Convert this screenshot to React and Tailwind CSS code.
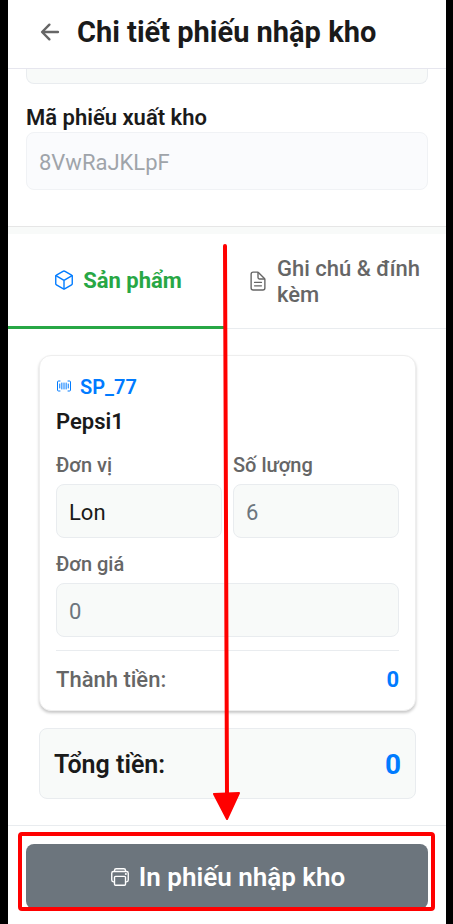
import {
  IoArrowBack,
  IoCubeOutline,
  IoDocumentTextOutline,
  IoPrintOutline,
} from "react-icons/io5";

function BarcodeIcon() {
  return (
    <svg width="16" height="16" viewBox="0 0 16 16" fill="none" stroke="currentColor" strokeLinecap="round" aria-hidden="true">
      <path d="M4 3H2.5Q1.5 3 1.5 4V12Q1.5 13 2.5 13H4M12 3H13.5Q14.5 3 14.5 4V12Q14.5 13 13.5 13H12" strokeWidth="1" />
      <path d="M3.75 6V10M5.85 5V11M8 5V11M10.15 5V11M12.25 6V10" strokeWidth="1" />
    </svg>
  );
}

function Field({ id, label, value, className }) {
  return (
    <div className="flex min-w-0 flex-1 flex-col gap-[6px]">
      <label htmlFor={id} className="text-[20px] leading-[26px] font-medium text-[#666666]">
        {label}
      </label>
      <input
        id={id}
        readOnly
        defaultValue={value}
        className={`h-[54px] w-full rounded-lg border border-[#e9ecef] bg-[#f8faf9] px-3 pt-[2px] text-[22px] outline-none ${className}`}
      />
    </div>
  );
}

function Header() {
  return (
    <header className="border-b border-[#e6e6ee] pb-1">
      <div className="flex h-16 items-center gap-[14px] pl-[29px]">
        <button type="button" aria-label="Quay lại" className="text-[#666666]">
          <IoArrowBack size={26} />
        </button>
        <h1 className="text-[29px] leading-8 font-bold whitespace-nowrap">Chi tiết phiếu nhập kho</h1>
      </div>
    </header>
  );
}

function Tabs() {
  return (
    <nav role="tablist" className="flex h-[95px]">
      <button
        type="button"
        role="tab"
        aria-selected="true"
        className="flex flex-1 items-center justify-center gap-2 border-b-[3px] border-[#28a745] px-5 text-[22px] leading-[26px] font-bold text-[#28a745]"
      >
        <IoCubeOutline size={22} className="shrink-0 text-[#007bff]" />
        <span className="pt-[2px]">Sản phẩm</span>
      </button>
      <button
        type="button"
        role="tab"
        aria-selected="false"
        className="flex flex-1 items-center justify-center gap-2 border-b border-[#e9ecef] px-5 text-left text-[22px] leading-[26px] font-medium text-[#666666]"
      >
        <IoDocumentTextOutline size={22} className="shrink-0" />
        <span className="pt-[2px]">Ghi chú &amp; đính kèm</span>
      </button>
    </nav>
  );
}

function ProductCard() {
  return (
    <article className="rounded-xl border border-[#eeeeee] bg-white p-4 shadow-[0_2px_3px_rgba(0,0,0,0.22)]">
      <div className="flex h-7 items-center gap-2 text-[20px] font-semibold text-[#007bff]">
        <BarcodeIcon />
        <span className="pt-[2px]">SP_77</span>
      </div>
      <h2 className="mt-2 text-[22px] leading-7 font-semibold">Pepsi1</h2>
      <div className="mt-4 flex gap-[11px]">
        <Field id="unit" label="Đơn vị" value="Lon" className="text-[#1a1a1a]" />
        <Field id="quantity" label="Số lượng" value="6" className="text-[#6c757d]" />
      </div>
      <div className="mt-[13px] flex">
        <Field id="price" label="Đơn giá" value="0" className="text-[#6c757d]" />
      </div>
      <div className="mt-[13px] flex justify-between border-t border-[#e9ecef] pt-[15px] text-[22px] leading-7">
        <span className="font-medium text-[#666666]">Thành tiền:</span>
        <span className="font-bold text-[#007bff]">0</span>
      </div>
    </article>
  );
}

export default function App() {
  return (
    <div className="relative min-h-screen bg-black pr-[7px] pl-2 font-[Roboto,sans-serif] text-[#1a1a1a]">
      <div className="flex min-h-screen flex-col bg-white">
        <Header />
        <main>
          <section className="border-b border-[#e6e6e6] px-[18px] pb-9">
            <div className="h-[15px] rounded-b-lg border border-t-0 border-[#e9ecef] bg-[#f8faf9]" />
            <label htmlFor="code" className="mt-5 block text-[22px] leading-7 font-semibold">
              Mã phiếu xuất kho
            </label>
            <input
              id="code"
              readOnly
              defaultValue="8VwRaJKLpF"
              className="block h-[58px] w-full rounded-lg border border-[#f0f2f5] bg-[#fafbfd] px-3 pt-[2px] text-[22px] text-[#9fa4aa] outline-none"
            />
          </section>
          <div className="h-[7px] bg-[#f8faf9]" />
          <Tabs />
          <section className="pt-[26px] pr-[30px] pb-[26px] pl-[31px]">
            <ProductCard />
            <div className="mt-[17px] flex h-[71px] items-center justify-between rounded-lg border border-[#e9ecef] bg-[#f8faf9] px-[14px] pt-[2px]">
              <span className="text-[25px] font-semibold">Tổng tiền:</span>
              <span className="text-[28px] font-bold text-[#007bff]">0</span>
            </div>
          </section>
        </main>
        <footer className="border-t border-[#e9ecef] px-[18px] pt-[18px] pb-[15px]">
          <div className="relative">
            <button
              type="button"
              className="flex h-[65px] w-full items-center justify-center gap-2 rounded-lg bg-[#6c757d] text-[26px] font-semibold text-white"
            >
              <IoPrintOutline size={22} />
              <span className="pt-[2px]">In phiếu nhập kho</span>
            </button>
            <div className="pointer-events-none absolute -top-3 -right-[7px] -bottom-[2px] -left-2 rounded border-4 border-[#ff0000]" />
          </div>
        </footer>
      </div>
      <svg
        className="pointer-events-none absolute top-[244px] left-[212px]"
        width="30"
        height="578"
        viewBox="0 0 30 578"
        aria-hidden="true"
      >
        <path d="M13 2L15 552" stroke="#ff0000" strokeWidth="4" strokeLinecap="round" />
        <path d="M2 550L27 549L15 575Z" fill="#ff0000" stroke="#ff0000" strokeWidth="2" strokeLinejoin="round" />
      </svg>
    </div>
  );
}
